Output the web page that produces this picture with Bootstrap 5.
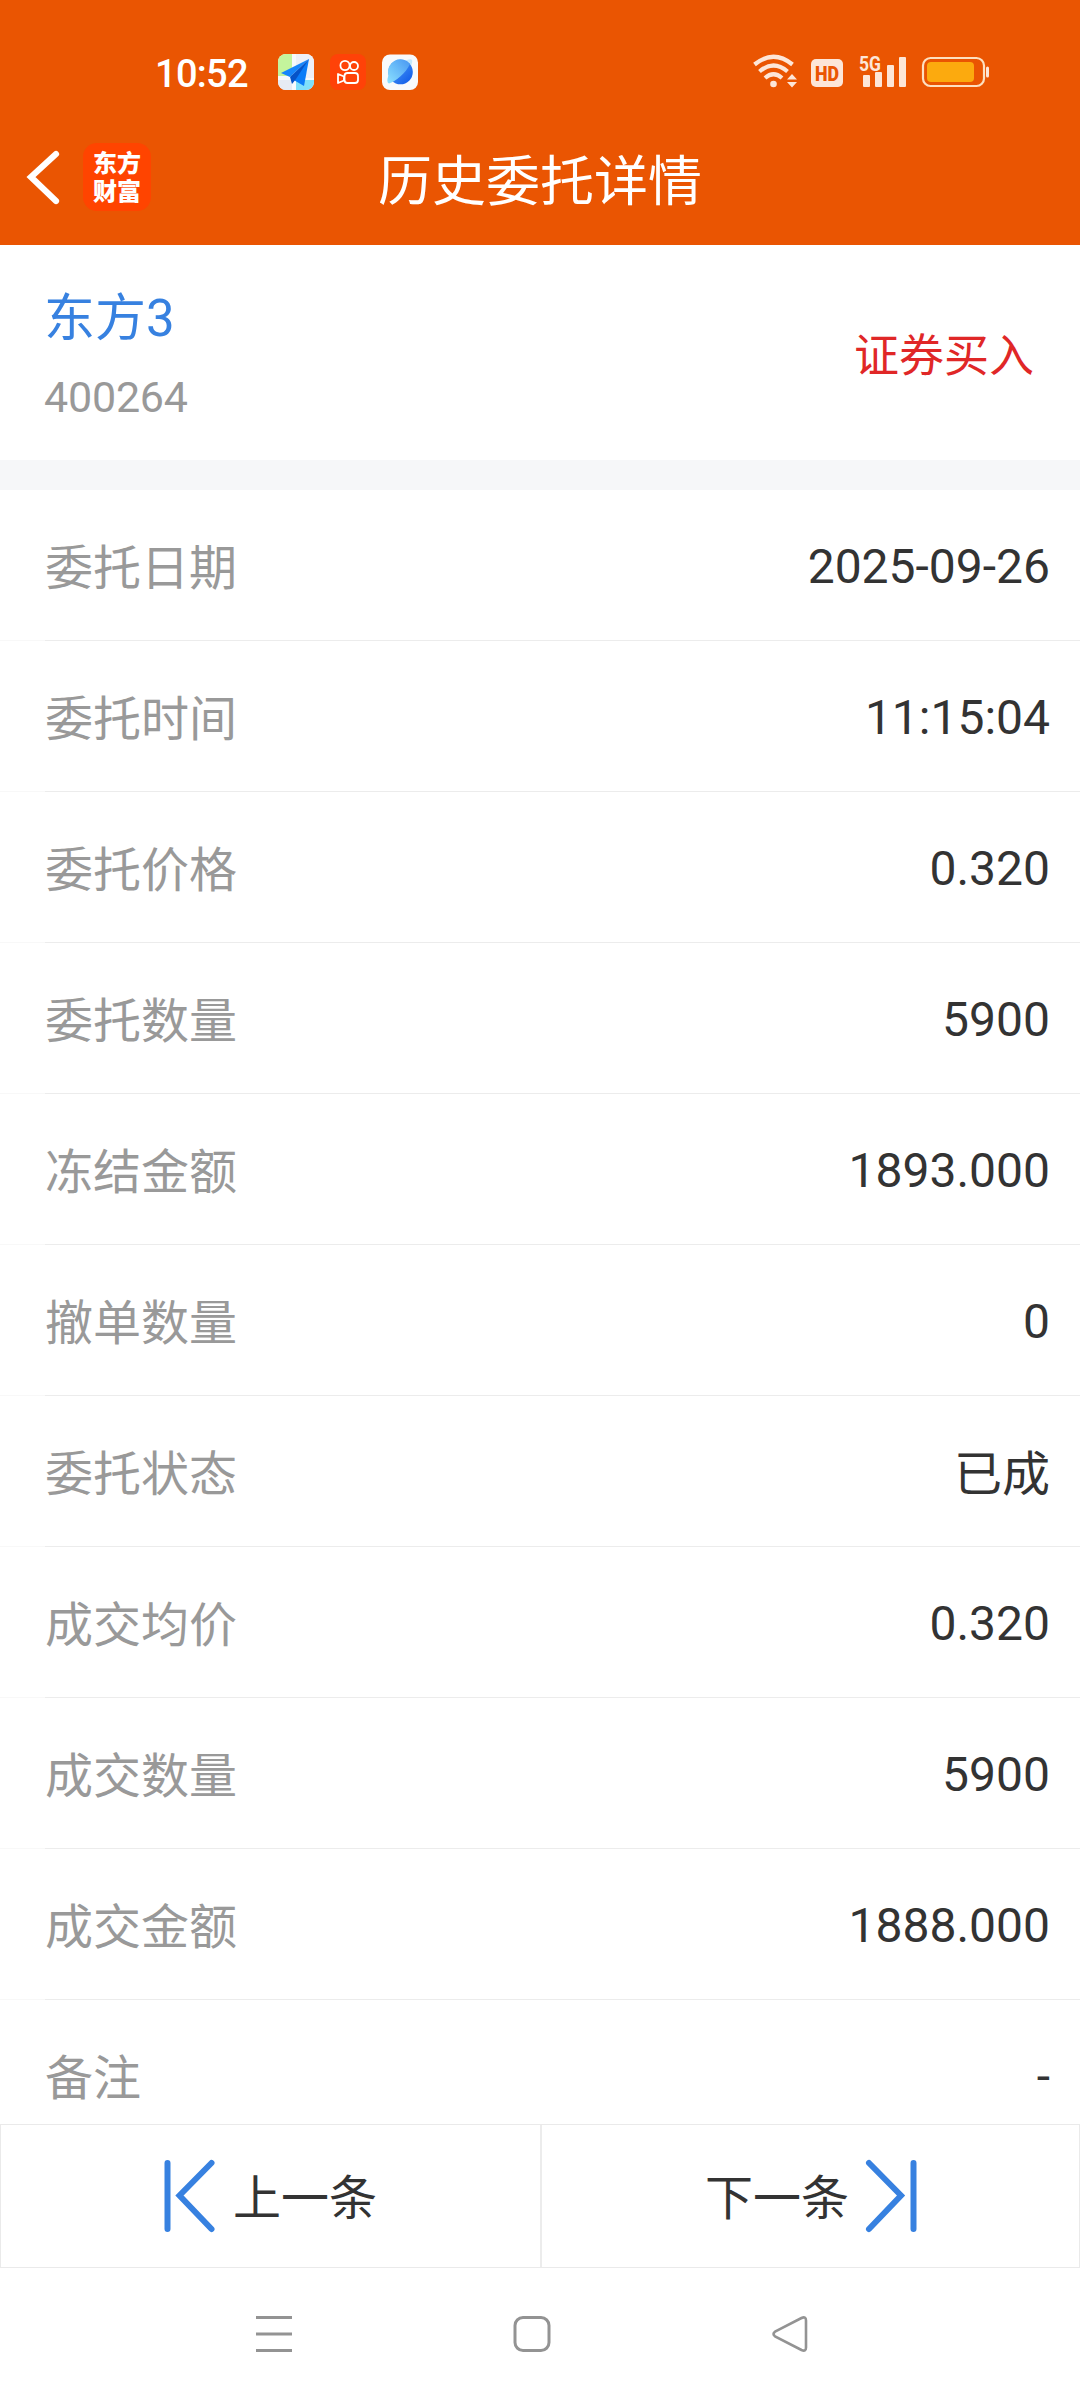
<!DOCTYPE html>
<html lang="zh-CN">
<head>
<meta charset="utf-8">
<meta name="viewport" content="width=device-width, initial-scale=1">
<title>历史委托详情</title>
<link href="https://cdn.jsdelivr.net/npm/bootstrap@5.3.0/dist/css/bootstrap.min.css" rel="stylesheet">
<style>
  body { font-family: Roboto, "Noto Sans CJK SC", sans-serif; color: #333; background: #fff; line-height: 1; }
  svg { display: block; flex: none; overflow: visible; }
  .phone { width: 1080px; height: 2400px; }
  .topbar { background: #ea5502; height: 245px; }
  .statusbar { height: 108px; padding: 54px 91px 0 155px; }
  .clock { font-size: 38px; font-weight: 500; width: 123px; letter-spacing: -.7px; line-height: 36px; padding-top: 2px; }
  .app-icons { gap: 16px; }
  .titlebar { height: 137px; }
  .titlebar .side { width: 300px; padding: 35px 0 0 26px; }
  .titlebar h1 { font-size: 54px; font-weight: 400; line-height: 66px; margin: 42px 0 0; }
  .brand { width: 68px; height: 68px; border-radius: 14px; background: #ff4400; font: 900 24px/28px "Noto Sans CJK SC", sans-serif; padding-top: 5px; margin-left: 24px; }
  .stock { height: 215px; padding: 0 46px 0 44px; }
  .stock-name { font-size: 51px; line-height: 60px; color: #3781e0; margin-top: 44px; }
  .stock-code { font-size: 43px; line-height: 50px; color: #999; margin-top: 23px; letter-spacing: -.2px; }
  .side-tag { font-size: 45px; line-height: 50px; color: #e02727; margin-top: 87px; }
  .divider-band { height: 30px; background: #f6f7f9; }
  .details { height: 1634px; }
  .details .list-group-item { height: 151px; padding: 3px 30px 0 45px; border: 0; font-size: 48px; color: #333; flex: none; background: linear-gradient(90deg, #f8f8f8 45px, #ececec 45px) bottom / 100% 1px no-repeat; }
  .details .field { color: #999; padding-top: 3px; }
  .details .cjk { padding-top: 3px; }
  .pager { height: 144px; border: 1px solid #eaeaea; flex: none; }
  .pager .btn { font-size: 48px; line-height: 60px; color: #333; padding: 0; border: 0; border-radius: 0; gap: 19px; }
  .pager .btn span { padding-top: 5px; }
  .pager .btn + .btn { border-left: 2px solid #ececec; gap: 17px; }
  .sysnav { height: 132px; padding: 0 271px 0 254px; }
</style>
<script src="https://cdn.jsdelivr.net/npm/bootstrap@5.3.0/dist/js/bootstrap.bundle.min.js"></script>
</head>
<body>
<div class="phone d-flex flex-column overflow-hidden">
  <header class="topbar text-white flex-shrink-0">
    <div class="statusbar d-flex align-items-start justify-content-between">
      <div class="d-flex align-items-start">
        <span class="clock">10:52</span>
        <div class="app-icons d-flex">
          <svg width="36" height="36" viewBox="0 0 36 36">
            <defs><clipPath id="tile"><rect width="36" height="36" rx="8"/></clipPath></defs>
            <g clip-path="url(#tile)">
              <rect width="36" height="36" fill="#f7fafc"/>
              <path d="M0 0h14v22H0z" fill="#c4f49c"/><path d="M18 0h18v24H18z" fill="#edf0f7"/>
              <path d="M18 26h18v10H18z" fill="#7fe0fa"/><path d="M0 26h14v10H0z" fill="#e6ebf4"/>
              <path d="M31 5 3 19l9 4z" fill="#1686fb"/><path d="M31 5 14 25l12 7z" fill="#0a7cf8"/>
              <path d="M31 5 12 23l2 7 4-5z" fill="#0553c8"/>
            </g>
          </svg>
          <svg width="36" height="36" viewBox="0 0 36 36" fill="none" stroke="#fff" stroke-width="1.8">
            <rect width="36" height="36" rx="8" fill="#ff4208" stroke="none"/>
            <circle cx="15" cy="11.500" r="4.600"/><circle cx="24" cy="12" r="4"/>
            <rect x="14.500" y="19" width="13.500" height="10" rx="3"/><path d="M14 22.500 8 20v9l6-2.500z" stroke-linejoin="round"/>
          </svg>
          <svg width="36" height="36" viewBox="0 0 36 36">
            <defs><linearGradient id="orb" x1="0" y1="0" x2="1" y2="1"><stop offset="0" stop-color="#57a9f8"/><stop offset="1" stop-color="#0b55e8"/></linearGradient>
            <linearGradient id="ring" x1="1" y1="0" x2="0" y2="1"><stop offset="0" stop-color="#4796f2"/><stop offset="1" stop-color="#8ce2ff"/></linearGradient></defs>
            <rect y=".5" width="36" height="35.500" rx="8" fill="#f8f9fb"/>
            <path d="M22 7q7-3 8-1t-2 8z" fill="#c4e8fb"/>
            <circle cx="18.500" cy="18" r="12.300" fill="url(#orb)"/>
            <path d="M28 10A12.300 12.300 0 0 0 6.500 21Q4 29 7 29.500C13 28 24 19 28 10z" fill="url(#ring)"/>
          </svg>
        </div>
      </div>
      <svg width="236" height="36" viewBox="0 0 236 36" fill="#fde6d8">
        <g fill="none" stroke="#fde6d8" stroke-width="4.200">
          <path d="M1.500 10.500Q20.500-5 39.500 10.500"/><path d="M6.500 17.500Q20.500 5.500 34.500 17.500"/><path d="M12 24Q20.500 16.500 29 24"/>
        </g>
        <circle cx="20.500" cy="30" r="3.300"/>
        <path d="m39 20 5 5.500H34zM34 28h10l-5 5.500z"/>
        <rect x="58" y="5" width="32" height="28" rx="5"/>
        <text x="74" y="26.500" text-anchor="middle" font-family="Roboto, sans-serif" font-weight="900" font-size="21" textLength="24" lengthAdjust="spacingAndGlyphs" fill="#ea5502">HD</text>
        <text x="106" y="16.500" font-family="Roboto, sans-serif" font-weight="700" font-size="21" textLength="22" lengthAdjust="spacingAndGlyphs">5G</text>
        <rect x="110" y="21" width="7" height="12" rx="1"/><rect x="122" y="18" width="7" height="15" rx="1"/><rect x="134" y="11" width="7" height="22" rx="1"/><rect x="146" y="3" width="7" height="30" rx="1"/>
        <rect x="170" y="4" width="61" height="28" rx="7.500" fill="none" stroke="#fde0c0" stroke-width="2.200"/>
        <rect x="174" y="8" width="47" height="20" rx="4" fill="#fcaa0e"/>
        <rect x="233" y="12.500" width="3" height="11" rx="1.500"/>
      </svg>
    </div>
    <div class="titlebar d-flex justify-content-between align-items-start">
      <div class="side d-flex">
        <svg width="33" height="68" viewBox="0 0 33 68" fill="none" stroke="#fff" stroke-width="6.200" stroke-linecap="round"><path d="M30 11 5 34l25 24" stroke-linejoin="miter"/></svg>
        <div class="brand text-center">东方<br>财富</div>
      </div>
      <h1>历史委托详情</h1>
      <div class="side"></div>
    </div>
  </header>

  <section class="stock d-flex justify-content-between align-items-start flex-shrink-0">
    <div>
      <div class="stock-name">东方3</div>
      <div class="stock-code">400264</div>
    </div>
    <div class="side-tag">证券买入</div>
  </section>
  <div class="divider-band flex-shrink-0"></div>

  <ul class="details list-group list-group-flush overflow-hidden flex-shrink-0">
    <li class="list-group-item d-flex justify-content-between align-items-center"><span class="field">委托日期</span><span>2025-09-26</span></li>
    <li class="list-group-item d-flex justify-content-between align-items-center"><span class="field">委托时间</span><span>11:15:04</span></li>
    <li class="list-group-item d-flex justify-content-between align-items-center"><span class="field">委托价格</span><span>0.320</span></li>
    <li class="list-group-item d-flex justify-content-between align-items-center"><span class="field">委托数量</span><span>5900</span></li>
    <li class="list-group-item d-flex justify-content-between align-items-center"><span class="field">冻结金额</span><span>1893.000</span></li>
    <li class="list-group-item d-flex justify-content-between align-items-center"><span class="field">撤单数量</span><span>0</span></li>
    <li class="list-group-item d-flex justify-content-between align-items-center"><span class="field">委托状态</span><span class="cjk">已成</span></li>
    <li class="list-group-item d-flex justify-content-between align-items-center"><span class="field">成交均价</span><span>0.320</span></li>
    <li class="list-group-item d-flex justify-content-between align-items-center"><span class="field">成交数量</span><span>5900</span></li>
    <li class="list-group-item d-flex justify-content-between align-items-center"><span class="field">成交金额</span><span>1888.000</span></li>
    <li class="list-group-item d-flex justify-content-between align-items-center"><span class="field">备注</span><span>-</span></li>
  </ul>

  <div class="pager d-flex">
    <button type="button" class="btn w-50 d-flex align-items-center justify-content-center">
      <svg width="50" height="73" viewBox="0 0 50 73" fill="none" stroke="#3781e0" stroke-width="6" stroke-linecap="round"><path d="M3.500 3v66M47.500 3 15.500 35.500l32 33.500"/></svg>
      <span>上一条</span>
    </button>
    <button type="button" class="btn w-50 d-flex align-items-center justify-content-center">
      <span>下一条</span>
      <svg width="50" height="73" viewBox="0 0 50 73" fill="none" stroke="#3781e0" stroke-width="6" stroke-linecap="round"><path d="M47.500 3v66M3 3l32 32.500L3 69"/></svg>
    </button>
  </div>

  <nav class="sysnav d-flex justify-content-between align-items-center" aria-label="系统导航">
    <svg width="40" height="40" viewBox="0 0 40 40" stroke="#939393" stroke-width="3"><path d="M2 3.500h36M2 20h36M2 36.500h36"/></svg>
    <svg width="40" height="40" viewBox="0 0 40 40" fill="none" stroke="#939393" stroke-width="3"><rect x="3" y="3.500" width="34" height="33" rx="8"/></svg>
    <svg width="40" height="40" viewBox="0 0 40 40" fill="none" stroke="#939393" stroke-width="2.600"><path d="M6 17.700 32.500 4Q37 2 37 6.500v27q0 4.500-4.500 2.500L6 22.300q-3-2.300 0-4.600z"/></svg>
  </nav>
</div>
</body>
</html>
